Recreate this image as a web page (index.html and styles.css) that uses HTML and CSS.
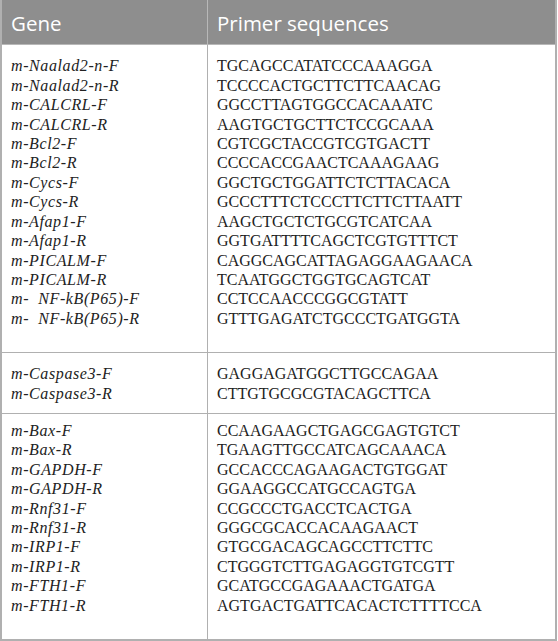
FILE: index.html
```html
<!DOCTYPE html>
<html>
<head>
<meta charset="utf-8">
<link rel="stylesheet" href="styles.css">
</head>
<body>
<div class="table">
  <div class="head">
    <div class="hcell gene">Gene</div>
    <div class="hcell seq">Primer sequences</div>
  </div>
  <div class="section s1">
    <div class="col gene">
      <div>m-Naalad2-n-F</div>
      <div>m-Naalad2-n-R</div>
      <div>m-CALCRL-F</div>
      <div>m-CALCRL-R</div>
      <div>m-Bcl2-F</div>
      <div>m-Bcl2-R</div>
      <div>m-Cycs-F</div>
      <div>m-Cycs-R</div>
      <div>m-Afap1-F</div>
      <div>m-Afap1-R</div>
      <div>m-PICALM-F</div>
      <div>m-PICALM-R</div>
      <div>m-&nbsp; NF-kB(P65)-F</div>
      <div>m-&nbsp; NF-kB(P65)-R</div>
    </div>
    <div class="col seq">
      <div>TGCAGCCATATCCCAAAGGA</div>
      <div>TCCCCACTGCTTCTTCAACAG</div>
      <div>GGCCTTAGTGGCCACAAATC</div>
      <div>AAGTGCTGCTTCTCCGCAAA</div>
      <div>CGTCGCTACCGTCGTGACTT</div>
      <div>CCCCACCGAACTCAAAGAAG</div>
      <div>GGCTGCTGGATTCTCTTACACA</div>
      <div>GCCCTTTCTCCCTTCTTCTTAATT</div>
      <div>AAGCTGCTCTGCGTCATCAA</div>
      <div>GGTGATTTTCAGCTCGTGTTTCT</div>
      <div>CAGGCAGCATTAGAGGAAGAACA</div>
      <div>TCAATGGCTGGTGCAGTCAT</div>
      <div>CCTCCAACCCGGCGTATT</div>
      <div>GTTTGAGATCTGCCCTGATGGTA</div>
    </div>
  </div>
  <div class="section s2">
    <div class="col gene">
      <div>m-Caspase3-F</div>
      <div>m-Caspase3-R</div>
    </div>
    <div class="col seq">
      <div>GAGGAGATGGCTTGCCAGAA</div>
      <div>CTTGTGCGCGTACAGCTTCA</div>
    </div>
  </div>
  <div class="section s3">
    <div class="col gene">
      <div>m-Bax-F</div>
      <div>m-Bax-R</div>
      <div>m-GAPDH-F</div>
      <div>m-GAPDH-R</div>
      <div>m-Rnf31-F</div>
      <div>m-Rnf31-R</div>
      <div>m-IRP1-F</div>
      <div>m-IRP1-R</div>
      <div>m-FTH1-F</div>
      <div>m-FTH1-R</div>
    </div>
    <div class="col seq">
      <div>CCAAGAAGCTGAGCGAGTGTCT</div>
      <div>TGAAGTTGCCATCAGCAAACA</div>
      <div>GCCACCCAGAAGACTGTGGAT</div>
      <div>GGAAGGCCATGCCAGTGA</div>
      <div>CCGCCCTGACCTCACTGA</div>
      <div>GGGCGCACCACAAGAACT</div>
      <div>GTGCGACAGCAGCCTTCTTC</div>
      <div>CTGGGTCTTGAGAGGTGTCGTT</div>
      <div>GCATGCCGAGAAACTGATGA</div>
      <div>AGTGACTGATTCACACTCTTTTCCA</div>
    </div>
  </div>
</div>
</body>
</html>
```
FILE: styles.css
```css
html, body {
  margin: 0;
  padding: 0;
  background: #ffffff;
}
.table {
  width: 557px;
  height: 641px;
  box-sizing: border-box;
  border: 2px solid #b0b0b0;
  border-top: none;
  display: flex;
  flex-direction: column;
}
.head {
  display: grid;
  grid-template-columns: 205px 1fr;
  height: 48px;
  background: #8e8e8e;
  border-bottom: 1px solid #b8b8b8;
  box-sizing: border-box;
}
.hcell {
  color: #ffffff;
  font-family: "Open Sans", "Noto Sans", sans-serif;
  font-size: 20.5px;
  display: flex;
  align-items: center;
  padding-left: 9px;
  padding-top: 2px;
}
.hcell.seq {
  border-left: 1px solid #b8b8b8;
}
.section {
  display: grid;
  grid-template-columns: 205px 1fr;
  border-bottom: 1px solid #b0b0b0;
  font-family: "Liberation Serif", "Times New Roman", serif;
  font-size: 16px;
  line-height: 19.4px;
  color: #222222;
}
.section.s3 {
  border-bottom: none;
  flex: 1;
}
.col {
  padding: 11px 0 24px 9px;
}
.s2 .col {
  padding-bottom: 10px;
}
.s3 .col {
  padding-top: 7px;
}
.col.gene {
  font-style: italic;
  letter-spacing: 0.6px;
}
.col.seq {
  border-left: 1px solid #b0b0b0;
}
```
